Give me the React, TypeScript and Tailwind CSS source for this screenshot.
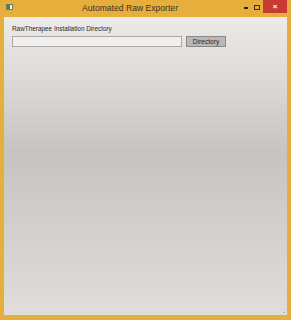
export default function App() {
  return (
    <div className="w-[291px] h-[320px] bg-[#e6ae3a] flex flex-col font-['Liberation_Sans',sans-serif]">
      {/* Title bar */}
      <div className="h-[17px] flex items-start relative">
        <div className="ml-[6px] mt-[4px] w-[7px] h-[6px] bg-[#f4f4f0] border border-[#7a7a60] flex">
          <div className="w-[3px] h-full bg-[#2d8a5a]" />
        </div>
        <div className="flex-1 text-center text-[8.6px] leading-[16px] text-[#3b3528] pl-[8px]">
          Automated Raw Exporter
        </div>
        <div className="flex items-start h-[14px]">
          <div className="w-[13px] h-[14px] flex items-center justify-center">
            <div className="w-[4px] h-[1.5px] bg-[#2a2010] mt-[2px]" />
          </div>
          <div className="w-[10px] h-[14px] flex items-center justify-center">
            <div className="w-[6px] h-[5px] border border-[#3a3020] border-t-[1.5px]" />
          </div>
          <div className="w-[24px] h-[13px] ml-[1px] bg-[#c83a34] flex items-center justify-center text-white text-[8px] font-bold leading-none mr-[4px]">
            ×
          </div>
        </div>
      </div>
      {/* Client area */}
      <div className="flex-1 mx-[4px] mb-[5px] bg-[linear-gradient(to_bottom,#ecebe9_0%,#d9d6d3_25%,#c6c3c0_45%,#d4d1ce_75%,#e0ddda_100%)] relative">
        <div className="pt-[7px] pl-[8px] flex flex-col">
          <div className="text-[6.4px] leading-[9px] text-[#2a2a2a]">RawTherapee Installation Directory</div>
          <div className="flex items-center mt-[3px] gap-[4px]">
            <div className="w-[170px] h-[11px] bg-[#f1f0ee] border border-[#aaa9a7]" />
            <div className="w-[40px] h-[11px] bg-[#b9b8b6] border border-[#8a8987] text-[6.6px] leading-[9px] text-center text-[#2a2a2a]">
              Directory
            </div>
          </div>
        </div>
        <div className="absolute right-[1px] bottom-[1px] w-[5px] h-[5px] grid grid-cols-3 opacity-60">
          <span />
          <span />
          <span className="bg-[#999] w-[1px] h-[1px]" />
          <span />
          <span className="bg-[#999] w-[1px] h-[1px]" />
          <span className="bg-[#999] w-[1px] h-[1px]" />
        </div>
      </div>
    </div>
  );
}
